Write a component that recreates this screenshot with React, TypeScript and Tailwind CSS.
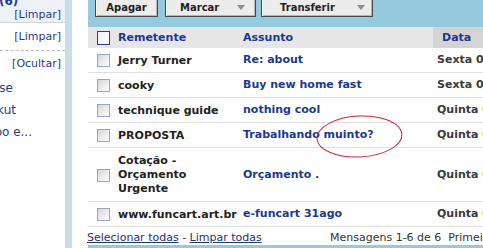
import React from "react";

type Msg = { from: React.ReactNode; subject: string; date: string; tall?: boolean };

const msgs: Msg[] = [
  { from: "Jerry Turner", subject: "Re: about", date: "Sexta 08/09/06" },
  { from: "cooky", subject: "Buy new home fast", date: "Sexta 08/09/06" },
  { from: "technique guide", subject: "nothing cool", date: "Quinta 07/09/06" },
  { from: "PROPOSTA", subject: "Trabalhando muinto?", date: "Quinta 07/09/06" },
  {
    from: (
      <>
        Cotação -<br />
        Orçamento<br />
        Urgente
      </>
    ),
    subject: "Orçamento .",
    date: "Quinta 07/09/06",
    tall: true,
  },
  { from: "www.funcart.art.br", subject: "e-funcart 31ago", date: "Quinta 07/09/06" },
];

function Check({ head }: { head?: boolean }) {
  return head ? (
    <span className="block w-[13px] h-[14px] border border-[#27427e] bg-gradient-to-br from-[#eef0f4] to-white" />
  ) : (
    <span className="block w-[13px] h-[13px] border border-[#9aa6b8] bg-gradient-to-br from-[#d6d6d6] to-white" />
  );
}

function Arrow() {
  return (
    <svg width="8" height="5" viewBox="0 0 8 5">
      <polygon points="0,0 8,0 4,5" fill="#8c8c8c" />
    </svg>
  );
}

function SideItem({ w, text }: { w: string; text: string }) {
  return (
    <div className="h-[22px] leading-[22px]">
      <div className={`${w} flex justify-end overflow-hidden whitespace-nowrap`}>
        <span className="shrink-0">{text}</span>
      </div>
    </div>
  );
}

export default function App() {
  return (
    <div className="relative w-[483px] h-[248px] overflow-hidden bg-white flex font-['DejaVu_Sans',Verdana,sans-serif]">
      {/* Sidebar */}
      <aside className="w-[66px] shrink-0 border-r border-[#d0d8df] text-[11px] text-[#1f3e82]">
        <div className="h-[28px] bg-[#eef2f6] border-b border-[#cdd5dc]">
          <div className="h-[8px] -mt-[5px] leading-[13px] text-[12px] font-bold text-[#1f3e8a] -ml-[1px]">(6)</div>
          <div className="mt-[5px] leading-[14px] text-right pr-[4px]">[Limpar]</div>
        </div>
        <div className="h-[28px] pt-[7px] leading-[14px] text-right pr-[4px] border-b border-dashed border-[#bdbdbd]">
          [Limpar]
        </div>
        <div className="pt-[6px] leading-[14px] text-right pr-[4px]">[Ocultar]</div>
        <div className="mt-[6px] text-[12px] text-[#23407a]">
          <SideItem w="w-[13px]" text="Enterprise" />
          <SideItem w="w-[16px]" text="Orkut" />
          <SideItem w="w-[32px]" text="Grupo e..." />
        </div>
      </aside>
      <div className="w-[6px] shrink-0 bg-[#c5dfe9]" />
      <div className="w-[16px] shrink-0" />

      {/* Main */}
      <main className="flex-1 flex flex-col text-[11px]">
        <div className="h-[27px] bg-[#94c9de] flex items-end pb-[10px] pl-[7px] text-[10px] font-bold text-[#222]">
          <button className="w-[63px] h-[22px] border border-[#4a4a4a] bg-[#ececec] shadow-[inset_1px_1px_0_#fff,inset_-1px_-1px_0_#b4b4b4] flex items-center justify-center pt-[2px]">
            Apagar
          </button>
          <button className="ml-[7px] w-[91px] h-[22px] border border-[#4a4a4a] bg-[#ececec] shadow-[inset_1px_1px_0_#fff,inset_-1px_-1px_0_#b4b4b4] flex items-center justify-between pl-[14px] pr-[10px] pt-[2px]">
            <span>Marcar</span>
            <Arrow />
          </button>
          <button className="ml-[5px] w-[112px] h-[22px] border border-[#4a4a4a] bg-[#ececec] shadow-[inset_1px_1px_0_#fff,inset_-1px_-1px_0_#b4b4b4] flex items-center justify-between pl-[18px] pr-[7px] pt-[2px]">
            <span>Transferir</span>
            <Arrow />
          </button>
        </div>

        <div className="h-[21px] grid grid-cols-[30px_125px_190px_1fr] bg-[#e6e6e6] font-bold text-[#1a3a8f]">
          <div className="flex items-center pl-[9px]">
            <Check head />
          </div>
          <div className="flex items-center pt-[1px]">Remetente</div>
          <div className="flex items-center pt-[1px]">Assunto</div>
          <div className="flex items-center pt-[1px] pl-[9px] bg-[#d4d4d4]">Data</div>
        </div>

        {msgs.map((m, i) => (
          <div
            key={i}
            className={`${m.tall ? "h-[54px]" : "h-[25px]"} grid grid-cols-[30px_125px_190px_1fr] items-center border-b border-[#e0e0e0] font-bold pt-[1px]`}
          >
            <div className="pl-[9px]">
              <Check />
            </div>
            <div className="text-[#222] leading-[14px] whitespace-nowrap">{m.from}</div>
            <div className="text-[#1c3a8c] whitespace-nowrap">{m.subject}</div>
            <div className="pl-[4px] text-[#3a3a3a] whitespace-nowrap">{m.date}</div>
          </div>
        ))}

        <div className="h-[18px] flex items-center pt-[5px] -ml-[1px] whitespace-nowrap">
          <div className="w-[243px] shrink-0 text-[#333]">
            <a href="#" className="underline text-[#1a3372]">Selecionar todas</a> -{" "}
            <a href="#" className="underline text-[#1a3372]">Limpar todas</a>
          </div>
          <div className="text-[#333]">Mensagens 1-6 de 6&nbsp;&nbsp;Primeira | Anterior</div>
        </div>
        <div className="h-[3px] bg-[#94c9de]" />
      </main>

      {/* annotation */}
      <svg className="absolute left-[315px] top-[114px]" width="90" height="46" viewBox="0 0 90 46">
        <ellipse cx="44.5" cy="22.5" rx="42.5" ry="20.5" fill="none" stroke="#c9283e" strokeWidth="1" transform="rotate(-3 44.5 22.5)" />
      </svg>
    </div>
  );
}
